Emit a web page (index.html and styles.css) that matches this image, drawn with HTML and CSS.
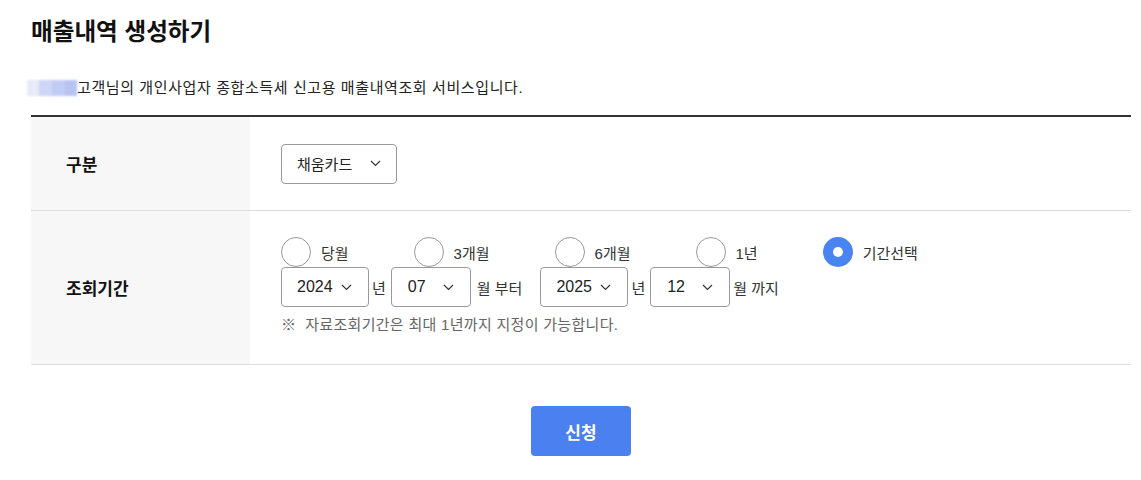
FILE: index.html
```html
<!DOCTYPE html>
<html lang="ko">
<head>
<meta charset="utf-8">
<title>매출내역 생성하기</title>
<link rel="stylesheet" href="styles.css">
</head>
<body>
<div class="page">
  <h1 class="title">매출내역 생성하기</h1>
  <p class="desc"><span class="blur-name"><i class="b1"></i><i class="b2"></i><i class="b3"></i><i class="b4"></i></span>고객님의 개인사업자 종합소득세 신고용 매출내역조회 서비스입니다.</p>

  <div class="form-table">
    <div class="row row-type">
      <div class="label">구분</div>
      <div class="value">
        <div class="select sel-card"><span>채움카드</span><svg class="chev" width="11" height="7" viewBox="0 0 11 7"><path d="M1 1l4.5 4.5L10 1" fill="none" stroke="#333" stroke-width="1.2"/></svg></div>
      </div>
    </div>
    <div class="row row-period">
      <div class="label">조회기간</div>
      <div class="value period">
        <div class="radios">
          <label class="radio"><span class="circle"></span><span class="rtext">당월</span></label>
          <label class="radio"><span class="circle"></span><span class="rtext">3개월</span></label>
          <label class="radio"><span class="circle"></span><span class="rtext">6개월</span></label>
          <label class="radio"><span class="circle"></span><span class="rtext">1년</span></label>
          <label class="radio checked"><span class="circle"></span><span class="rtext">기간선택</span></label>
        </div>
        <div class="dates">
          <div class="select sel-year"><span>2024</span><svg class="chev" width="11" height="7" viewBox="0 0 11 7"><path d="M1 1l4.5 4.5L10 1" fill="none" stroke="#333" stroke-width="1.2"/></svg></div>
          <span class="unit">년</span>
          <div class="select sel-month"><span>07</span><svg class="chev" width="11" height="7" viewBox="0 0 11 7"><path d="M1 1l4.5 4.5L10 1" fill="none" stroke="#333" stroke-width="1.2"/></svg></div>
          <span class="unit wide">월 부터</span>
          <div class="select sel-year"><span>2025</span><svg class="chev" width="11" height="7" viewBox="0 0 11 7"><path d="M1 1l4.5 4.5L10 1" fill="none" stroke="#333" stroke-width="1.2"/></svg></div>
          <span class="unit">년</span>
          <div class="select sel-month"><span>12</span><svg class="chev" width="11" height="7" viewBox="0 0 11 7"><path d="M1 1l4.5 4.5L10 1" fill="none" stroke="#333" stroke-width="1.2"/></svg></div>
          <span class="unit">월 까지</span>
        </div>
        <p class="note">※&nbsp; 자료조회기간은 최대 1년까지 지정이 가능합니다.</p>
      </div>
    </div>
  </div>

  <div class="actions">
    <button class="btn-submit" type="button">신청</button>
  </div>
</div>
</body>
</html>
```

FILE: styles.css
```css
* { box-sizing: border-box; }

body {
  margin: 0;
  background: #fff;
  color: #222;
  font-family: "Liberation Sans", "Noto Sans CJK KR", sans-serif;
}

.page {
  width: 1100px;
  margin-left: 31px;
  padding-top: 16px;
}

.title {
  margin: 0;
  font-size: 23.6px;
  line-height: 28px;
  font-weight: 700;
  color: #111;
  font-family: "Noto Sans CJK KR", sans-serif;
}

.desc {
  margin: 34px 0 0 -4px;
  font-size: 15px;
  line-height: 20px;
  color: #222;
  display: flex;
  align-items: center;
  letter-spacing: 0.6px;
}

.blur-name {
  display: inline-flex;
  width: 50px;
  height: 16px;
  filter: blur(1.2px);
  opacity: 0.8;
}
.blur-name i { display: block; height: 100%; }
.blur-name .b1 { width: 12px; background: #e3e6f7; }
.blur-name .b2 { width: 13px; background: #c3cbf4; }
.blur-name .b3 { width: 13px; background: #b3bff2; }
.blur-name .b4 { width: 12px; background: #a7b5ef; }

.form-table {
  margin-top: 17px;
  border-top: 2px solid #333;
}

.row {
  display: grid;
  grid-template-columns: 219px 1fr;
  border-bottom: 1px solid #ddd;
}

.row-type { height: 94px; }
.row-period { height: 154px; }

.label {
  background: #f7f7f7;
  padding-left: 35px;
  display: flex;
  align-items: center;
  font-size: 17px;
  font-weight: 700;
  color: #111;
  font-family: "Noto Sans CJK KR", sans-serif;
}

.value {
  padding-left: 31px;
  display: flex;
  align-items: center;
}

.select {
  height: 40px;
  border: 1px solid #999;
  border-radius: 4px;
  display: flex;
  align-items: center;
  justify-content: space-between;
  padding: 0 16px 0 15px;
  font-size: 16px;
  color: #222;
  background: #fff;
}
.select .chev { flex: none; }

.sel-card { width: 116px; padding-right: 15px; font-size: 15px; }
.sel-card span { font-family: "Noto Sans CJK KR", sans-serif; }
.sel-year { width: 88px; }
.sel-month { width: 80px; padding-left: 16px; }

.period {
  flex-direction: column;
  align-items: flex-start;
  justify-content: flex-start;
  padding-top: 26px;
}

.radios {
  display: flex;
  align-items: center;
  height: 30px;
}

.radio {
  display: flex;
  align-items: center;
  margin-right: 65px;
  font-size: 15px;
  color: #333;
}
.radio:last-child { margin-right: 0; }

.circle {
  width: 30px;
  height: 30px;
  border-radius: 50%;
  border: 1px solid #999;
  background: #fff;
  margin-right: 10px;
  flex: none;
}

.radio.checked .circle {
  border: 10px solid #4a84f1;
  background: #fff;
}

.dates {
  display: flex;
  align-items: center;
  height: 40px;
  font-size: 15px;
  color: #333;
}

.unit { margin: 0 5px 0 3px; }
.unit.wide { margin: 0 18px 0 6px; }

.note {
  margin: 8px 0 0;
  font-size: 15px;
  line-height: 20px;
  color: #666;
  letter-spacing: 0.3px;
}

.actions {
  display: flex;
  justify-content: center;
  padding-top: 41px;
}

.btn-submit {
  width: 100px;
  height: 50px;
  border: 0;
  border-radius: 4px;
  background: #4a80f0;
  color: #fff;
  font-size: 17px;
  font-weight: 700;
  font-family: "Noto Sans CJK KR", sans-serif;
}
```
